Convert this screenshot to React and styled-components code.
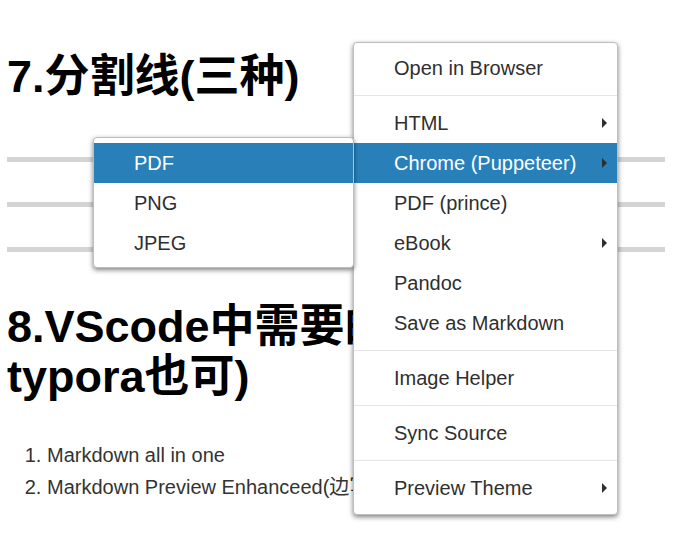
import React from 'react';
import styled, { createGlobalStyle } from 'styled-components';

const GlobalStyle = createGlobalStyle`
  html, body {
    margin: 0;
    padding: 0;
    background: #fff;
  }
  body {
    font-family: "Liberation Sans", "Noto Sans CJK SC", sans-serif;
  }
`;

export const StyledPage = styled.div`
  position: relative;
  width: 690px;
  height: 552px;
  overflow: hidden;
  padding: 0 25px 0 7px;
  box-sizing: border-box;
`;

export const StyledHeading = styled.h1`
  margin: ${props => props.top}px 0 0 0;
  font-size: 45px;
  line-height: 50px;
  font-weight: bold;
  color: #000;
  font-family: "Liberation Sans", "Noto Sans CJK SC", sans-serif;
`;

export const StyledRule = styled.div`
  height: 5px;
  background: #d5d5d5;
  margin-top: ${props => props.top}px;
`;

export const StyledOrderedList = styled.ol`
  margin: 37px 0 0 0;
  padding-left: 40px;
  font-size: 20px;
  line-height: 32px;
  color: #333;
  white-space: nowrap;
`;

export const StyledMenu = styled.ul`
  position: absolute;
  left: ${props => props.left}px;
  top: ${props => props.top}px;
  width: ${props => props.width}px;
  box-sizing: border-box;
  margin: 0;
  padding: 5px 0 ${props => props.bottom}px;
  list-style: none;
  background: #fff;
  border: 1px solid #bebebe;
  border-radius: 4px;
  box-shadow: 0 2px 5px rgba(0, 0, 0, 0.5);
  font-size: 20px;
  z-index: ${props => props.layer};
`;

export const StyledItem = styled.li`
  display: flex;
  align-items: center;
  height: 40px;
  padding: 0 10px 0 40px;
  color: ${props => (props.active ? '#fff' : '#2f2f2f')};
  background: ${props => (props.active ? '#2980b9' : '#fff')};
  white-space: nowrap;
`;

export const StyledLabel = styled.span`
  flex: 1;
`;

export const StyledArrow = styled.span`
  width: 0;
  height: 0;
  border-style: solid;
  border-width: 5px 0 5px 5px;
  border-color: transparent transparent transparent #2f2f2f;
`;

export const StyledSeparator = styled.li`
  height: 0;
  margin: 7px 0;
  border-bottom: 1px solid #e6e6e6;
`;

const mainItems = [
  { label: 'Open in Browser' },
  { sep: true },
  { label: 'HTML', sub: true },
  { label: 'Chrome (Puppeteer)', sub: true, active: true },
  { label: 'PDF (prince)' },
  { label: 'eBook', sub: true },
  { label: 'Pandoc' },
  { label: 'Save as Markdown' },
  { sep: true },
  { label: 'Image Helper' },
  { sep: true },
  { label: 'Sync Source' },
  { sep: true },
  { label: 'Preview Theme', sub: true },
];

const subItems = [
  { label: 'PDF', active: true },
  { label: 'PNG' },
  { label: 'JPEG' },
];

const Menu = ({ items, left, top, width, bottom, layer }) => (
  <StyledMenu left={left} top={top} width={width} bottom={bottom} layer={layer}>
    {items.map((item, i) =>
      item.sep ? (
        <StyledSeparator key={i} />
      ) : (
        <StyledItem key={i} active={item.active ? 1 : 0}>
          <StyledLabel>{item.label}</StyledLabel>
          {item.sub && <StyledArrow />}
        </StyledItem>
      )
    )}
  </StyledMenu>
);

const App = () => (
  <StyledPage>
    <GlobalStyle />
    <StyledHeading top={52}>7.分割线(三种)</StyledHeading>
    <StyledRule top={55} />
    <StyledRule top={40} />
    <StyledRule top={40} />
    <StyledHeading top={50}>8.VScode中需要的插件(用typora也可)</StyledHeading>
    <StyledOrderedList>
      <li>Markdown all in one</li>
      <li>Markdown Preview Enhanceed(边写边预览)</li>
    </StyledOrderedList>
    <Menu items={mainItems} left={353} top={42} width={265} bottom={6} layer={1} />
    <Menu items={subItems} left={93} top={137} width={261} bottom={4} layer={2} />
  </StyledPage>
);

export default App;
